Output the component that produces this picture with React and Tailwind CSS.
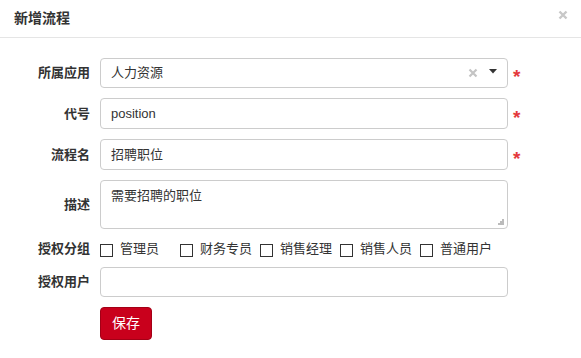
import React from 'react';

const cjk = { fontFamily: '"Liberation Sans", "Noto Sans CJK SC", sans-serif' };

function Label({ children }) {
    return (
        <div className="w-[100px] pr-[10px] text-right text-[13px] font-bold text-[#333] shrink-0">{children}</div>
    );
}

function Star() {
    return <span className="ml-[5px] text-[19px] font-bold text-[#e4393c] leading-none mt-[7px]">*</span>;
}

const groups = ['管理员', '财务专员', '销售经理', '销售人员', '普通用户'];

export default function App() {
    return (
        <div className="w-[581px] h-[358px] bg-white overflow-hidden" style={cjk}>
            {/* 标题栏 */}
            <div className="h-[38px] border-b border-[#e5e5e5] flex items-center justify-between pl-[14px] pr-[13px]">
                <span className="text-[14px] font-bold text-[#333]">新增流程</span>
                <svg width="10" height="10" viewBox="0 0 10 10" className="-mt-[8px]">
                    <path d="M1.5 1.5 L8.5 8.5 M8.5 1.5 L1.5 8.5" stroke="#c8c8c8" strokeWidth="2.4" />
                </svg>
            </div>

            <div className="pt-[20px]">
                <div className="flex items-center mb-[10px]">
                    <Label>所属应用</Label>
                    <div className="w-[408px] h-[30px] border border-[#ccc] rounded-[4px] flex items-center pl-[10px] pr-[10px] text-[13px] text-[#333]">
                        <span className="flex-1">人力资源</span>
                        <svg width="10" height="10" viewBox="0 0 10 10" className="mr-[11px]">
                            <path d="M1.5 1.5 L8.5 8.5 M8.5 1.5 L1.5 8.5" stroke="#c4c4c4" strokeWidth="2.2" />
                        </svg>
                        <svg width="8" height="5" viewBox="0 0 8 5" className="-mt-[3px]">
                            <path d="M0 0 L8 0 L4 4.5 Z" fill="#333" />
                        </svg>
                    </div>
                    <Star />
                </div>

                <div className="flex items-center mb-[10px]">
                    <Label>代号</Label>
                    <div className="w-[408px] h-[31px] border border-[#ccc] rounded-[4px] flex items-center pl-[10px] text-[13px] text-[#333]">
                        position
                    </div>
                    <Star />
                </div>

                <div className="flex items-center mb-[10px]">
                    <Label>流程名</Label>
                    <div className="w-[408px] h-[31px] border border-[#ccc] rounded-[4px] flex items-center pl-[10px] text-[13px] text-[#333]">
                        招聘职位
                    </div>
                    <Star />
                </div>

                <div className="flex items-center">
                    <Label>描述</Label>
                    <div className="relative w-[408px] h-[49px] border border-[#ccc] rounded-[4px] pl-[10px] pt-[5px] text-[13px] text-[#333]">
                        需要招聘的职位
                        <svg width="6" height="6" viewBox="0 0 6 6" className="absolute right-[3px] bottom-[3px]">
                            <rect x="4" y="0" width="2" height="2" fill="#bbb" />
                            <rect x="2" y="2" width="2" height="2" fill="#bbb" />
                            <rect x="4" y="2" width="2" height="2" fill="#bbb" />
                            <rect x="0" y="4" width="2" height="2" fill="#bbb" />
                            <rect x="2" y="4" width="2" height="2" fill="#bbb" />
                            <rect x="4" y="4" width="2" height="2" fill="#bbb" />
                        </svg>
                    </div>
                </div>

                <div className="flex items-center h-[20px] mt-[10px]">
                    <Label>授权分组</Label>
                    {groups.map((g) => (
                        <div key={g} className="w-[80px] flex items-center shrink-0">
                            <span className="w-[13px] h-[13px] border border-[#333] mt-[3px] mr-[7px] shrink-0" />
                            <span className="text-[13px] text-[#333]">{g}</span>
                        </div>
                    ))}
                </div>

                <div className="flex items-center mt-[8px]">
                    <Label>授权用户</Label>
                    <div className="w-[408px] h-[30px] border border-[#ccc] rounded-[4px]" />
                </div>

                <div className="flex mt-[10px]">
                    <div className="w-[100px]" />
                    <button className="w-[52px] h-[33px] bg-[#c9001c] border border-[#a30016] rounded-[4px] text-white text-[14px]">
                        保存
                    </button>
                </div>
            </div>
        </div>
    );
}
